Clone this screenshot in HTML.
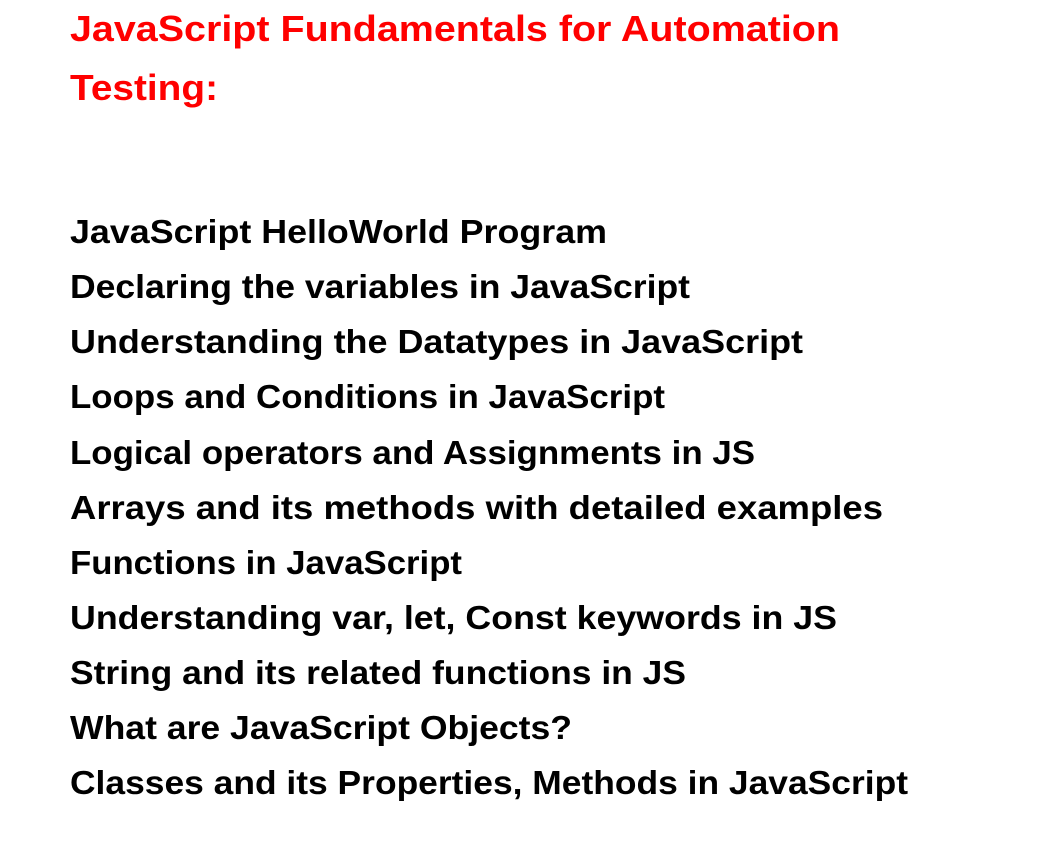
<!DOCTYPE html>
<html><head><meta charset="utf-8"><style>
html,body{margin:0;padding:0;background:#fff;}
svg{display:block;}
text{font-family:"Liberation Sans",sans-serif;font-weight:bold;}
.t{fill:#f00;font-size:36px;}
.l{fill:#000;font-size:33px;}
</style></head><body>
<svg width="1048" height="852" xmlns="http://www.w3.org/2000/svg">
<rect width="1048" height="852" fill="#fff"/>
<text class="t" x="70" y="41" textLength="770" lengthAdjust="spacingAndGlyphs">JavaScript Fundamentals for Automation</text>
<text class="t" x="70" y="100" textLength="148" lengthAdjust="spacingAndGlyphs">Testing:</text>
<text class="l" x="70" y="243" textLength="537" lengthAdjust="spacingAndGlyphs">JavaScript HelloWorld Program</text>
<text class="l" x="70" y="298" textLength="620" lengthAdjust="spacingAndGlyphs">Declaring the variables in JavaScript</text>
<text class="l" x="70" y="353" textLength="733" lengthAdjust="spacingAndGlyphs">Understanding the Datatypes in JavaScript</text>
<text class="l" x="70" y="408" textLength="595" lengthAdjust="spacingAndGlyphs">Loops and Conditions in JavaScript</text>
<text class="l" x="70" y="464" textLength="685" lengthAdjust="spacingAndGlyphs">Logical operators and Assignments in JS</text>
<text class="l" x="70" y="519" textLength="813" lengthAdjust="spacingAndGlyphs">Arrays and its methods with detailed examples</text>
<text class="l" x="70" y="574" textLength="392" lengthAdjust="spacingAndGlyphs">Functions in JavaScript</text>
<text class="l" x="70" y="629" textLength="767" lengthAdjust="spacingAndGlyphs">Understanding var, let, Const keywords in JS</text>
<text class="l" x="70" y="684" textLength="616" lengthAdjust="spacingAndGlyphs">String and its related functions in JS</text>
<text class="l" x="70" y="739" textLength="502" lengthAdjust="spacingAndGlyphs">What are JavaScript Objects?</text>
<text class="l" x="70" y="794" textLength="838" lengthAdjust="spacingAndGlyphs">Classes and its Properties, Methods in JavaScript</text>
</svg>
</body></html>
